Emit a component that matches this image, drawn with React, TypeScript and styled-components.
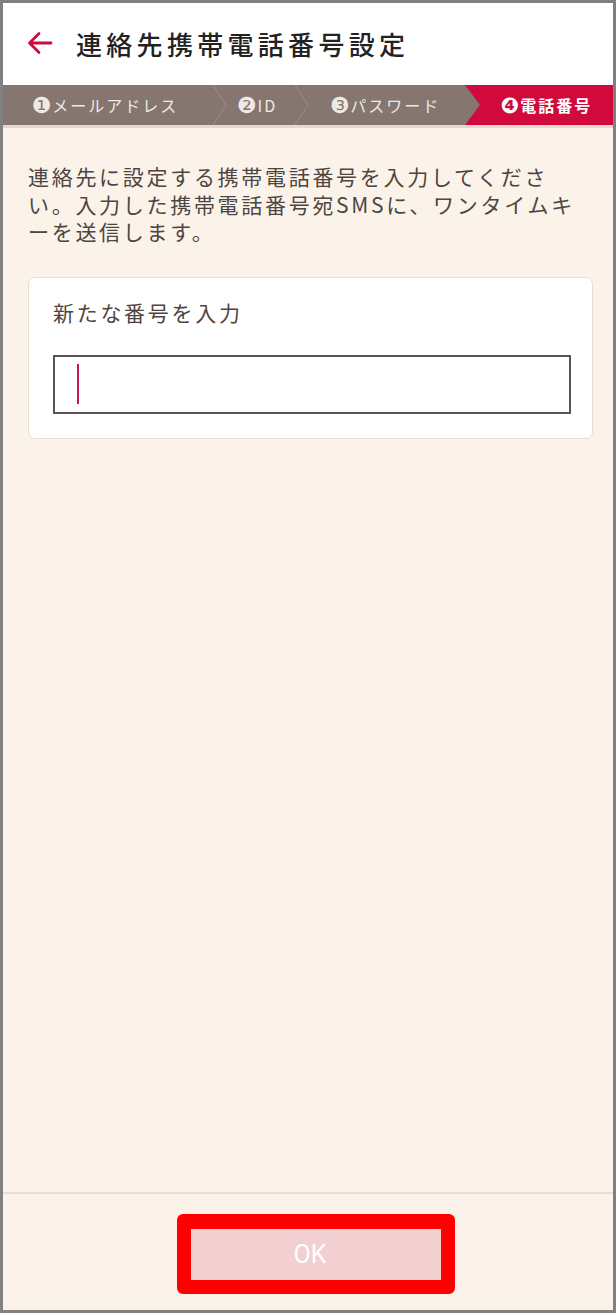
import styled, { createGlobalStyle } from "styled-components";

const GlobalStyle = createGlobalStyle`
  html, body {
    margin: 0;
    padding: 0;
    background: #ffffff;
  }
  * {
    box-sizing: border-box;
  }
`;

const steps = [
  { num: "❶", label: "メールアドレス", width: 210, pad: "0 6px 0 0" },
  { num: "❷", label: "ID", width: 82, pad: "0 0 0 6px" },
  { num: "❸", label: "パスワード", width: 170, pad: "0 0 0 10px" },
  { num: "❹", label: "電話番号", active: true },
];

const BackArrow = () => (
  <svg width="26" height="24" viewBox="0 0 26 24" fill="none">
    <path
      d="M24 12H3M12 2.5L2.5 12L12 21.5"
      stroke="#d00a3c"
      strokeWidth="2.8"
      strokeLinecap="round"
      strokeLinejoin="round"
    />
  </svg>
);

const Chevron = () => (
  <Divider width="15" height="40" viewBox="0 0 15 40">
    <polyline points="1,0 14,20 1,40" fill="none" stroke="#9d8e86" strokeWidth="1" />
  </Divider>
);

const App = () => {
  return (
    <Frame>
      <GlobalStyle />
      <Header>
        <BackArrow />
        <Title>連絡先携帯電話番号設定</Title>
      </Header>
      <StepBar>
        {steps.map((step, i) => (
          <Step key={step.label} $width={step.width} $active={step.active} $pad={step.pad}>
            <StepLabel $active={step.active}>
              <StepNum>{step.num}</StepNum>
              {step.label}
            </StepLabel>
            {!step.active && i < 2 && <Chevron />}
          </Step>
        ))}
      </StepBar>
      <Content>
        <Description>
          連絡先に設定する携帯電話番号を入力してください。入力した携帯電話番号宛SMSに、ワンタイムキーを送信します。
        </Description>
        <Card>
          <FieldLabel>新たな番号を入力</FieldLabel>
          <Field>
            <Caret />
          </Field>
        </Card>
      </Content>
      <Footer>
        <Highlight>
          <OkButton type="button">OK</OkButton>
        </Highlight>
      </Footer>
    </Frame>
  );
};

const Frame = styled.div`
  width: 616px;
  height: 1313px;
  border: 3px solid #808080;
  display: flex;
  flex-direction: column;
  background: #fbf3ea;
  font-family: "Noto Sans CJK JP", "Noto Sans", sans-serif;
  overflow: hidden;
`;

const Header = styled.header`
  height: 82px;
  flex: 0 0 82px;
  background: #ffffff;
  display: flex;
  align-items: center;
  gap: 23px;
  padding: 0 0 2px 24px;
`;

const Title = styled.h1`
  margin: 0;
  font-size: 26px;
  font-weight: 500;
  letter-spacing: 4.3px;
  color: #222222;
`;

const StepBar = styled.nav`
  flex: 0 0 43px;
  display: flex;
  background: #857770;
  border-bottom: 3px solid #e4dad3;
`;

const Step = styled.div<{ $width?: number; $active?: boolean; $pad?: string }>`
  position: relative;
  flex: ${({ $width }) => ($width ? `0 0 ${$width}px` : "1")};
  display: flex;
  align-items: center;
  justify-content: center;
  padding: ${({ $pad, $active }) => ($active ? "0 0 0 15px" : $pad || "0")};
  background: ${({ $active }) => ($active ? "#d00a3c" : "transparent")};
  clip-path: ${({ $active }) =>
    $active ? "polygon(0 0, 100% 0, 100% 100%, 0 100%, 15px 50%)" : "none"};
`;

const StepLabel = styled.span<{ $active?: boolean }>`
  display: flex;
  align-items: center;
  font-size: 16px;
  letter-spacing: 2px;
  white-space: nowrap;
  color: ${({ $active }) => ($active ? "#ffffff" : "#efe9e5")};
  font-weight: ${({ $active }) => ($active ? 700 : 400)};
`;

const StepNum = styled.span`
  font-family: "DejaVu Sans", sans-serif;
  font-size: 22px;
  line-height: 1;
  letter-spacing: 0;
  margin: 1px 1px 0 0;
`;

const Divider = styled.svg`
  position: absolute;
  top: 0;
  right: -14px;
  z-index: 1;
`;

const Content = styled.main`
  flex: 1;
  padding: 35px 25px 0 25px;
  display: flex;
  flex-direction: column;
  gap: 31px;
`;

const Description = styled.p`
  margin: 0;
  font-size: 21px;
  line-height: 27.5px;
  letter-spacing: 2.7px;
  color: #4d4541;
`;

const Card = styled.section`
  width: 565px;
  background: #ffffff;
  border: 1px solid #e6ddd3;
  border-radius: 7px;
  padding: 20px 21px 24px 24px;
  display: flex;
  flex-direction: column;
  gap: 29px;
`;

const FieldLabel = styled.div`
  font-size: 21px;
  line-height: 28px;
  letter-spacing: 2.7px;
  color: #4d4541;
`;

const Field = styled.div`
  height: 59px;
  border: 2px solid #5a5350;
  background: #ffffff;
  display: flex;
  align-items: center;
  padding-left: 22px;
`;

const Caret = styled.span`
  width: 2px;
  height: 40px;
  background: #c8174a;
`;

const Footer = styled.footer`
  flex: 0 0 118px;
  border-top: 2px solid #e7ded5;
  display: flex;
  align-items: center;
  justify-content: center;
  padding: 4px 0 0 16px;
`;

const Highlight = styled.div`
  border: 14px solid #ff0000;
  border-width: 15px 14px 14px 14px;
  border-radius: 6px;
  display: flex;
`;

const OkButton = styled.button`
  width: 250px;
  height: 51px;
  border: none;
  background: #f2cfd0;
  color: #ffffff;
  font-family: Roboto, "Noto Sans", sans-serif;
  font-size: 25px;
  padding: 0 12px 0 0;
`;

export default App;
